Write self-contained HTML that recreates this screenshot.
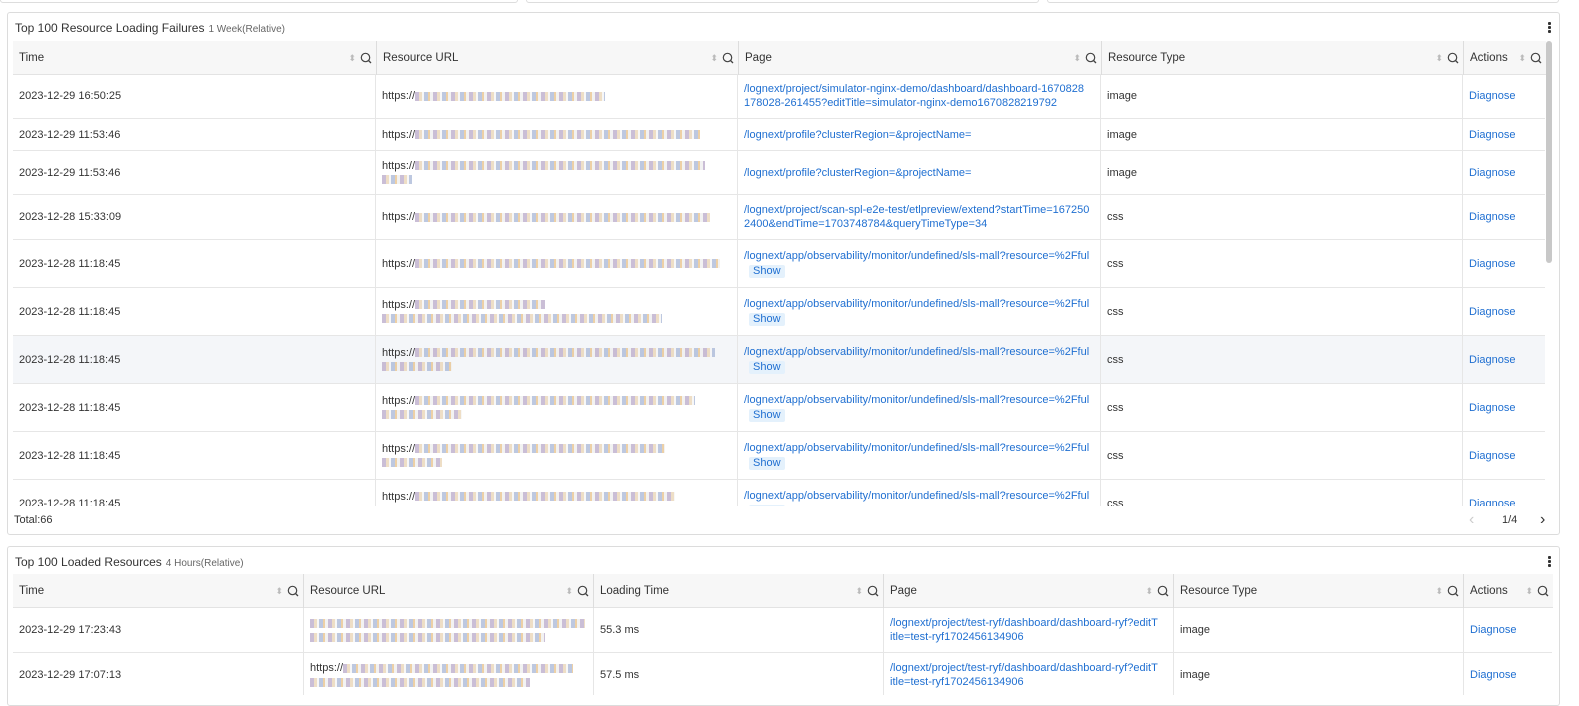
<!DOCTYPE html>
<html><head><meta charset="utf-8"><style>
*{box-sizing:border-box;margin:0;padding:0}
body{width:1579px;height:695px;overflow:hidden;background:#fff;font-family:"Liberation Sans",Arial,sans-serif;font-size:11.5px;color:#333;position:relative}
.stub{position:absolute;top:-6px;height:9px;border:1px solid #ddd;border-radius:3px}
.panel{position:absolute;left:7px;width:1553px;border:1px solid #dcdcdc;border-radius:3px;background:#fff;overflow:hidden}
.title{position:absolute;left:7px;font-size:12px;color:#333}
.title small{font-size:10px;color:#666;margin-left:4px}
.dots{position:absolute;right:8px;width:3px}
.dots i{display:block;width:3px;height:3px;background:#333;margin-bottom:1px;border-radius:1px}
.tbl{position:absolute;left:5px}
.hd{position:absolute;background:#f7f7f7;height:34px;border-bottom:1px solid #e3e3e3}
.hc{position:absolute;top:0;height:34px;line-height:34px;padding-left:6px;border-right:1px solid #ddd;color:#333;font-size:11.5px}
.ic{position:absolute;right:4px;top:0;color:#555;font-size:12px;display:flex;align-items:center;height:34px}
.ic b{color:#bbb;font-size:9px;font-weight:normal;margin-right:4px}
.row{position:absolute;left:0;border-bottom:1px solid #e6e6e6}
.c{position:absolute;top:0;bottom:0;padding-left:6px;border-right:1px solid #e6e6e6;display:flex;flex-direction:column;justify-content:center;line-height:14px;font-size:11px;white-space:nowrap;overflow:hidden}
a{color:#1f6fd1;text-decoration:none}
.show{display:inline-block;background:#e4f1fc;color:#1f6fd1;padding:0 4px;margin:2px 0 0 5px;border-radius:2px;line-height:13px}
.blur{display:inline-block;height:9px;vertical-align:middle;background:repeating-linear-gradient(90deg,#b9a9c8 0 4px,#e9d3b3 4px 7px,#f4f4f4 7px 9px,#a7b6d6 9px 13px,#e7c089 13px 15px,#eeeeee 15px 18px);opacity:.75}
</style></head><body>
<svg width="0" height="0" style="position:absolute"><defs><symbol id="q" viewBox="0 0 12 12"><circle cx="5.5" cy="5.5" r="4.2" fill="none" stroke="#444" stroke-width="1.2"/><path d="M8.5 8.5L11 11" stroke="#444" stroke-width="1.3"/></symbol></defs></svg>
<div class="stub" style="left:0;width:518px"></div>
<div class="stub" style="left:526px;width:513px"></div>
<div class="stub" style="left:1047px;width:512px"></div>

<div class="panel" style="top:12px;height:523px">
 <div class="title" style="top:8px">Top 100 Resource Loading Failures<small>1 Week(Relative)</small></div>
 <div class="dots" style="top:9px"><i></i><i></i><i></i></div>
 <div style="position:absolute;left:1538px;top:28px;width:6px;height:222px;background:#c8c8c8;border-radius:3px"></div>
 <div class="tbl" style="top:28px;width:1533px;height:466px;overflow:hidden">
  <div class="hd" style="width:1533px">
   <div class="hc" style="left:0;width:364px">Time<span class="ic"><b>⬍</b><svg width="12" height="12"><use href="#q"/></svg></span></div>
   <div class="hc" style="left:364px;width:362px">Resource URL<span class="ic"><b>⬍</b><svg width="12" height="12"><use href="#q"/></svg></span></div>
   <div class="hc" style="left:726px;width:363px">Page<span class="ic"><b>⬍</b><svg width="12" height="12"><use href="#q"/></svg></span></div>
   <div class="hc" style="left:1089px;width:362px">Resource Type<span class="ic"><b>⬍</b><svg width="12" height="12"><use href="#q"/></svg></span></div>
   <div class="hc" style="left:1451px;width:82px;border-right:0">Actions<span class="ic"><b>⬍</b><svg width="12" height="12"><use href="#q"/></svg></span></div>
  </div>
 </div>
</div>
<div style="position:absolute;left:14px;top:514px;font-size:11px">Total:66</div>
<div style="position:absolute;left:1469px;top:511px;color:#ccc;font-size:16px">&#x2039;</div>
<div style="position:absolute;left:1502px;top:514px;color:#333;font-size:11px">1/4</div>
<div style="position:absolute;left:1540px;top:511px;color:#333;font-size:16px">&#x203A;</div>

<div class="panel" style="top:546px;height:160px">
 <div class="title" style="top:8px">Top 100 Loaded Resources<small>4 Hours(Relative)</small></div>
 <div class="dots" style="top:9px"><i></i><i></i><i></i></div>
 <div class="tbl" style="top:27px;width:1540px;height:140px">
  <div class="hd" style="width:1540px">
   <div class="hc" style="left:0;width:291px">Time<span class="ic"><b>⬍</b><svg width="12" height="12"><use href="#q"/></svg></span></div>
   <div class="hc" style="left:291px;width:290px">Resource URL<span class="ic"><b>⬍</b><svg width="12" height="12"><use href="#q"/></svg></span></div>
   <div class="hc" style="left:581px;width:290px">Loading Time<span class="ic"><b>⬍</b><svg width="12" height="12"><use href="#q"/></svg></span></div>
   <div class="hc" style="left:871px;width:290px">Page<span class="ic"><b>⬍</b><svg width="12" height="12"><use href="#q"/></svg></span></div>
   <div class="hc" style="left:1161px;width:290px">Resource Type<span class="ic"><b>⬍</b><svg width="12" height="12"><use href="#q"/></svg></span></div>
   <div class="hc" style="left:1451px;width:89px;border-right:0">Actions<span class="ic"><b>⬍</b><svg width="12" height="12"><use href="#q"/></svg></span></div>
  </div>
 </div>
</div>

<div style="position:absolute;left:13px;top:74px;width:1532px;height:432px;overflow:hidden">
<div class="row" style="top:0;height:45px;width:1532px"><div class="c" style="left:0;width:363px">2023-12-29 16:50:25</div><div class="c" style="left:363px;width:362px"><div>https://<span class="blur" style="width:190px"></span></div></div><div class="c" style="left:725px;width:363px"><a>/lognext/project/simulator-nginx-demo/dashboard/dashboard-1670828<br>178028-261455?editTitle=simulator-nginx-demo1670828219792</a></div><div class="c" style="left:1088px;width:362px">image</div><div class="c" style="left:1450px;width:82px;border:0"><a>Diagnose</a></div></div>
<div class="row" style="top:45px;height:32px;width:1532px"><div class="c" style="left:0;width:363px">2023-12-29 11:53:46</div><div class="c" style="left:363px;width:362px"><div>https://<span class="blur" style="width:285px"></span></div></div><div class="c" style="left:725px;width:363px"><a>/lognext/profile?clusterRegion=&amp;projectName=</a></div><div class="c" style="left:1088px;width:362px">image</div><div class="c" style="left:1450px;width:82px;border:0"><a>Diagnose</a></div></div>
<div class="row" style="top:77px;height:44px;width:1532px"><div class="c" style="left:0;width:363px">2023-12-29 11:53:46</div><div class="c" style="left:363px;width:362px"><div>https://<span class="blur" style="width:290px"></span></div><div><span class="blur" style="width:30px"></span></div></div><div class="c" style="left:725px;width:363px"><a>/lognext/profile?clusterRegion=&amp;projectName=</a></div><div class="c" style="left:1088px;width:362px">image</div><div class="c" style="left:1450px;width:82px;border:0"><a>Diagnose</a></div></div>
<div class="row" style="top:121px;height:45px;width:1532px"><div class="c" style="left:0;width:363px">2023-12-28 15:33:09</div><div class="c" style="left:363px;width:362px"><div>https://<span class="blur" style="width:295px"></span></div></div><div class="c" style="left:725px;width:363px"><a>/lognext/project/scan-spl-e2e-test/etlpreview/extend?startTime=167250<br>2400&amp;endTime=1703748784&amp;queryTimeType=34</a></div><div class="c" style="left:1088px;width:362px">css</div><div class="c" style="left:1450px;width:82px;border:0"><a>Diagnose</a></div></div>
<div class="row" style="top:166px;height:48px;width:1532px"><div class="c" style="left:0;width:363px">2023-12-28 11:18:45</div><div class="c" style="left:363px;width:362px"><div>https://<span class="blur" style="width:305px"></span></div></div><div class="c" style="left:725px;width:363px"><a>/lognext/app/observability/monitor/undefined/sls-mall?resource=%2Fful</a><div><span class="show">Show</span></div></div><div class="c" style="left:1088px;width:362px">css</div><div class="c" style="left:1450px;width:82px;border:0"><a>Diagnose</a></div></div>
<div class="row" style="top:214px;height:48px;width:1532px"><div class="c" style="left:0;width:363px">2023-12-28 11:18:45</div><div class="c" style="left:363px;width:362px"><div>https://<span class="blur" style="width:130px"></span></div><div><span class="blur" style="width:280px"></span></div></div><div class="c" style="left:725px;width:363px"><a>/lognext/app/observability/monitor/undefined/sls-mall?resource=%2Fful</a><div><span class="show">Show</span></div></div><div class="c" style="left:1088px;width:362px">css</div><div class="c" style="left:1450px;width:82px;border:0"><a>Diagnose</a></div></div>
<div class="row" style="top:262px;height:48px;width:1532px;background:#f4f6f9"><div class="c" style="left:0;width:363px">2023-12-28 11:18:45</div><div class="c" style="left:363px;width:362px"><div>https://<span class="blur" style="width:300px"></span></div><div><span class="blur" style="width:70px"></span></div></div><div class="c" style="left:725px;width:363px"><a>/lognext/app/observability/monitor/undefined/sls-mall?resource=%2Fful</a><div><span class="show">Show</span></div></div><div class="c" style="left:1088px;width:362px">css</div><div class="c" style="left:1450px;width:82px;border:0"><a>Diagnose</a></div></div>
<div class="row" style="top:310px;height:48px;width:1532px"><div class="c" style="left:0;width:363px">2023-12-28 11:18:45</div><div class="c" style="left:363px;width:362px"><div>https://<span class="blur" style="width:280px"></span></div><div><span class="blur" style="width:80px"></span></div></div><div class="c" style="left:725px;width:363px"><a>/lognext/app/observability/monitor/undefined/sls-mall?resource=%2Fful</a><div><span class="show">Show</span></div></div><div class="c" style="left:1088px;width:362px">css</div><div class="c" style="left:1450px;width:82px;border:0"><a>Diagnose</a></div></div>
<div class="row" style="top:358px;height:48px;width:1532px"><div class="c" style="left:0;width:363px">2023-12-28 11:18:45</div><div class="c" style="left:363px;width:362px"><div>https://<span class="blur" style="width:250px"></span></div><div><span class="blur" style="width:60px"></span></div></div><div class="c" style="left:725px;width:363px"><a>/lognext/app/observability/monitor/undefined/sls-mall?resource=%2Fful</a><div><span class="show">Show</span></div></div><div class="c" style="left:1088px;width:362px">css</div><div class="c" style="left:1450px;width:82px;border:0"><a>Diagnose</a></div></div>
<div class="row" style="top:406px;height:48px;width:1532px"><div class="c" style="left:0;width:363px">2023-12-28 11:18:45</div><div class="c" style="left:363px;width:362px"><div>https://<span class="blur" style="width:260px"></span></div><div><span class="blur" style="width:60px"></span></div></div><div class="c" style="left:725px;width:363px"><a>/lognext/app/observability/monitor/undefined/sls-mall?resource=%2Fful</a><div><span class="show">Show</span></div></div><div class="c" style="left:1088px;width:362px">css</div><div class="c" style="left:1450px;width:82px;border:0"><a>Diagnose</a></div></div>
</div>

<div style="position:absolute;left:13px;top:608px;width:1539px;height:87px;overflow:hidden">
<div class="row" style="top:0;height:45px;width:1539px"><div class="c" style="left:0;width:291px">2023-12-29 17:23:43</div><div class="c" style="left:291px;width:290px"><div><span class="blur" style="width:275px"></span></div><div><span class="blur" style="width:235px"></span></div></div><div class="c" style="left:581px;width:290px">55.3 ms</div><div class="c" style="left:871px;width:290px"><a>/lognext/project/test-ryf/dashboard/dashboard-ryf?editT<br>itle=test-ryf1702456134906</a></div><div class="c" style="left:1161px;width:290px">image</div><div class="c" style="left:1451px;width:88px;border:0"><a>Diagnose</a></div></div>
<div class="row" style="top:45px;height:45px;width:1539px"><div class="c" style="left:0;width:291px">2023-12-29 17:07:13</div><div class="c" style="left:291px;width:290px"><div>https://<span class="blur" style="width:230px"></span></div><div><span class="blur" style="width:220px"></span></div></div><div class="c" style="left:581px;width:290px">57.5 ms</div><div class="c" style="left:871px;width:290px"><a>/lognext/project/test-ryf/dashboard/dashboard-ryf?editT<br>itle=test-ryf1702456134906</a></div><div class="c" style="left:1161px;width:290px">image</div><div class="c" style="left:1451px;width:88px;border:0"><a>Diagnose</a></div></div>
</div>
</body></html>
